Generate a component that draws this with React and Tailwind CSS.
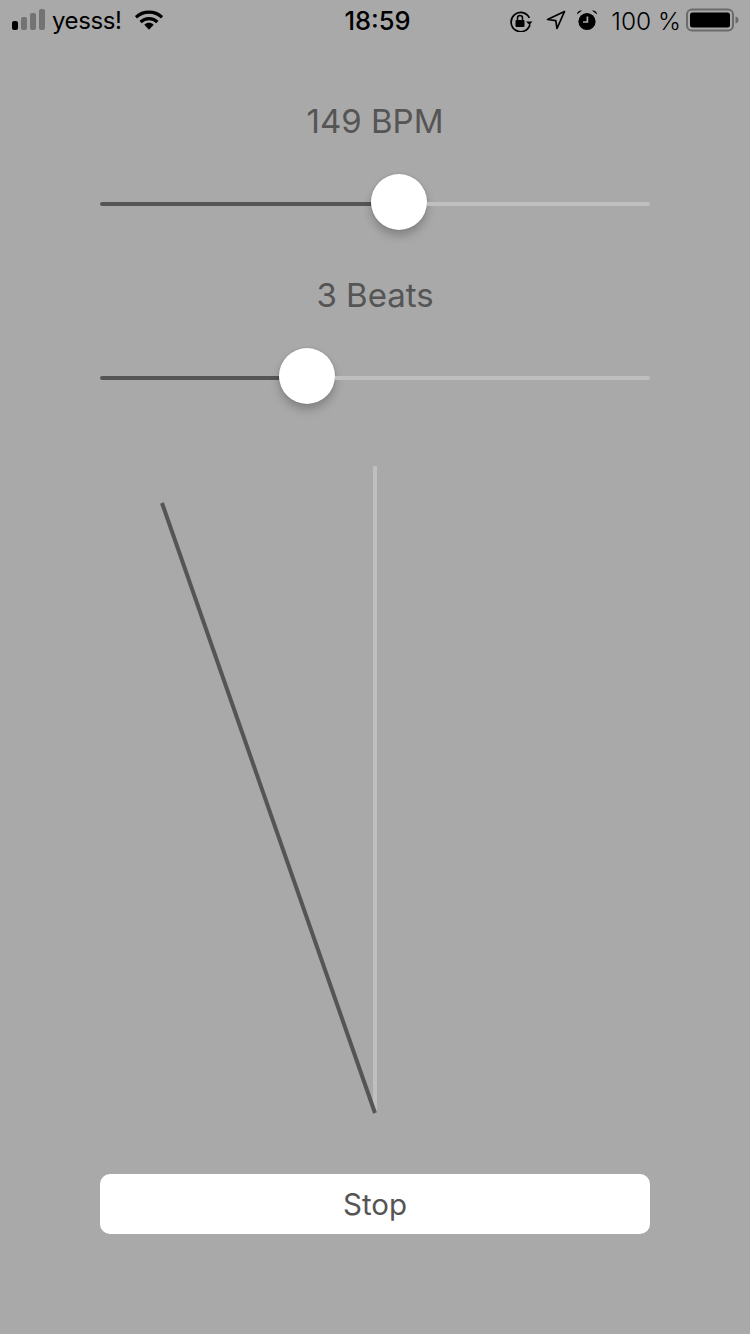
function Slider({ left }) {
  return (
    <div className="flex items-center w-[550px] h-14">
      <div className="h-1 mt-1 bg-[#555555] rounded-l-full" style={{ width: left }} />
      <div className="w-14 h-14 shrink-0 rounded-full bg-white shadow-[0_6px_10px_rgba(0,0,0,0.22),0_0_2px_rgba(0,0,0,0.2)]" />
      <div className="h-1 mt-1 flex-1 bg-[#bfbfbf] rounded-r-full" />
    </div>
  );
}

function Signal() {
  return (
    <svg width="34" height="22" viewBox="0 0 34 22" className="shrink-0">
      <rect x="0" y="12" width="6" height="9" rx="2" fill="#000" />
      <rect x="9" y="8" width="6" height="13" rx="2" fill="#737373" />
      <rect x="18" y="4" width="6" height="17" rx="2" fill="#737373" />
      <rect x="27" y="0" width="6" height="21" rx="2" fill="#737373" />
    </svg>
  );
}

function Wifi() {
  return (
    <svg width="28" height="21" viewBox="0 0 30 22" className="shrink-0">
      <path d="M1 7.5C8.8 0.2 21.2 0.2 29 7.5" fill="none" stroke="#000" strokeWidth="3.4" />
      <path d="M6 12.6C11 7.8 19 7.8 24 12.6" fill="none" stroke="#000" strokeWidth="3.4" />
      <path d="M10 15.6C13 12.8 17 12.8 20 15.6L15 21Z" fill="#000" />
    </svg>
  );
}

function RotationLock() {
  return (
    <svg width="24" height="22" viewBox="0 0 24 22" className="shrink-0">
      <path d="M21 14.5A9.6 9.6 0 1 1 20.4 8" fill="none" stroke="#000" strokeWidth="1.7" />
      <path d="M17 11.5h6.5l-3.2 3.6Z" fill="#000" />
      <rect x="6.5" y="10" width="9" height="7" rx="1" fill="#000" />
      <path d="M8.5 10V8a2.5 2.5 0 0 1 5 0v2" fill="none" stroke="#000" strokeWidth="1.5" />
    </svg>
  );
}

function Location() {
  return (
    <svg width="20" height="20" viewBox="0 0 20 20" className="shrink-0">
      <path d="M18.5 1.5L1.5 9.5L9.8 10.6L11 18.5Z" fill="none" stroke="#000" strokeWidth="1.7" strokeLinejoin="round" />
    </svg>
  );
}

function Alarm() {
  return (
    <svg width="22" height="22" viewBox="0 0 22 22" className="shrink-0">
      <circle cx="11" cy="12.5" r="8.6" fill="#000" />
      <path d="M11.4 7.5V13H7" fill="none" stroke="#a9a9a9" strokeWidth="1.7" />
      <path d="M1 5.5A4 4 0 0 1 6 1.6Z" fill="#000" />
      <path d="M21 5.5A4 4 0 0 0 16 1.6Z" fill="#000" />
    </svg>
  );
}

function Battery() {
  return (
    <svg width="53" height="24" viewBox="0 0 53 24" className="shrink-0">
      <rect x="1" y="1.5" width="46" height="21" rx="5" fill="none" stroke="#6b6b6b" strokeWidth="2" />
      <rect x="4" y="4.5" width="40" height="15" rx="2.5" fill="#000" />
      <path d="M49.5 8.5C51.5 9 52.5 10.2 52.5 12C52.5 13.8 51.5 15 49.5 15.5Z" fill="#6b6b6b" />
    </svg>
  );
}

export default function App() {
  return (
    <div className="w-[750px] h-[1334px] bg-[#a9a9a9] flex flex-col items-center font-['Inter','Liberation_Sans',sans-serif] overflow-hidden">
      <div className="w-full h-10 flex items-center justify-between pl-3 pr-[11px] text-black text-[24px] font-normal">
        <div className="flex items-center flex-1">
          <Signal />
          <span className="ml-[6px] tracking-[-0.4px] pt-[2px]">yesss!</span>
          <span className="ml-[13px]"><Wifi /></span>
        </div>
        <span className="font-medium text-[25.5px] pt-[3px] ml-[4px]">18:59</span>
        <div className="flex items-center flex-1 justify-end">
          <span className="mt-[1px]"><RotationLock /></span>
          <span className="ml-[13px]"><Location /></span>
          <span className="ml-[10px]"><Alarm /></span>
          <span className="ml-[13px] whitespace-nowrap font-light text-[24.5px] pt-[2px]">100 %</span>
          <span className="ml-[5px]"><Battery /></span>
        </div>
      </div>

      <div className="mt-[58px] h-12 flex items-center text-[33px] font-normal text-[#555555]">149 BPM</div>
      <div className="mt-[28px]"><Slider left={271} /></div>

      <div className="mt-[42px] h-12 flex items-center text-[33px] font-normal text-[#555555]">3 Beats</div>
      <div className="mt-[28px]"><Slider left={179} /></div>

      <svg width="550" height="660" viewBox="0 0 550 660" className="mt-[58px] shrink-0">
        <rect x="273" y="4" width="4" height="646" fill="#bfbfbf" />
        <line x1="275" y1="651" x2="62" y2="41" stroke="#555555" strokeWidth="4" />
      </svg>

      <button className="mt-[52px] w-[550px] h-[60px] bg-white rounded-[10px] text-[29.5px] font-normal text-[#555555]">Stop</button>
    </div>
  );
}
